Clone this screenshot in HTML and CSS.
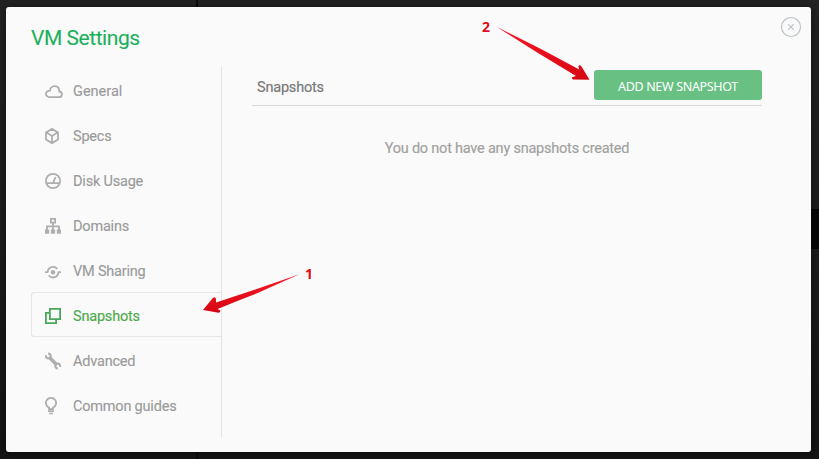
FILE: index.html
```html
<!DOCTYPE html>
<html lang="en">
<head>
<meta charset="utf-8">
<title>VM Settings</title>
<link rel="stylesheet" href="styles.css">
</head>
<body>
<div class="backdrop-line"></div>
<div class="backdrop-band"></div>
<main class="modal">
  <h1 class="title">VM Settings</h1>
  <button class="close" aria-label="Close"><svg width="22" height="22" viewBox="0 0 22 22"><circle cx="11" cy="11" r="9.5"/><path d="M8.2 8.2l5.6 5.6M13.8 8.2l-5.6 5.6"/></svg></button>
  <div class="columns">
    <nav class="menu">
      <a class="item"><svg class="icon" viewBox="0 0 18 18"><path d="M4.2 15.1h9.6a2.8 2.8 0 0 0 .5-5.6c0-3.5-2-5.4-4.6-5.4-2.7 0-4.6 2-4.7 4.6C2.5 8.9 1 10.2 1 12a3.1 3.1 0 0 0 3.2 3.1z"/></svg><span class="wide">General</span></a>
      <a class="item"><svg class="icon" viewBox="0 0 18 18"><path d="M7 1.9l6 3.5v7.2l-6 3.5-6-3.5V5.4zM1.5 5.6L7 9l5.500-3.400M7 9v6.700"/></svg><span>Specs</span></a>
      <a class="item"><svg class="icon" viewBox="0 0 18 18"><circle cx="8" cy="9" r="7.1"/><path d="M1.3 11.2h13.4M8 10.8l2.7-5.6"/></svg><span>Disk Usage</span></a>
      <a class="item"><svg class="icon" viewBox="0 0 18 18"><path d="M5.9 1.9h4.2v3.700H5.900zM8 6v7M2 13V9.400h12V13"/><path class="fill" d="M0 12.600h4.200v4.200H0zM5.900 12.600h4.200v4.200H5.900zM11.800 12.600H16v4.200h-4.200z"/></svg><span>Domains</span></a>
      <a class="item"><svg class="icon" viewBox="0 0 18 18"><path d="M0 10.200h2.400C3.200 6.800 5.400 4.900 8 4.900c1.900 0 3.300.8 4.300 2M16 10.200h-2.400c-.8 3.400-3 5.300-5.600 5.300-1.900 0-3.300-.8-4.300-2"/><circle class="fill" cx="8" cy="10.200" r="2.200"/></svg><span>VM Sharing</span></a>
      <a class="item active"><svg class="icon" viewBox="0 0 18 18"><path d="M4.900 1.900h10.200v10.200H4.900zM4 5.900H.9v10.200h10.200v-3"/></svg><span>Snapshots</span></a>
      <a class="item"><svg class="icon" viewBox="0 0 18 18"><path d="M1 3.300A2.400 2.400 0 1 0 3.100 1.600M15 14.700A2.400 2.400 0 1 0 12.900 16.400" stroke-width="2.200"/><path d="M5 6l6 6" stroke-width="3.600"/></svg><span>Advanced</span></a>
      <a class="item"><svg class="icon" viewBox="0 0 18 18"><path d="M4 12.100V10.600A5.100 5.100 0 1 1 8 10.600v1.500z"/><path class="fill" d="M3 13.300h6v1.800H3zM4.100 15.700h3.800v1.500H4.100z"/></svg><span>Common guides</span></a>
    </nav>
    <section class="content">
      <header class="bar"><h2 class="heading">Snapshots</h2><button class="add">ADD NEW SNAPSHOT</button></header>
      <p class="empty">You do not have any snapshots created</p>
    </section>
  </div>
</main>
<svg class="arrows" width="819" height="459" viewBox="0 0 819 459">
  <defs><linearGradient id="red" x2="0" y2="1"><stop offset="0" stop-color="#fa1824"/><stop offset="1" stop-color="#d50713"/></linearGradient></defs>
  <path d="M496.5 26.800L540 48.500L579.300 69.500L578.300 66Q580 64.200 581.500 66.500L589.500 79.800L573 79.500Q571 78 572.500 77L576 76L557 64.500L536 51.800Z"/>
  <path d="M299.5 274.300L256 289.300L216 302.500L216 299Q215.500 296.500 213 297.800L203 310L218.500 312.700Q221 312 220 310.300L217.500 309L243 298.800L257 293.300Z"/>
</svg>
<span class="mark one">1</span>
<span class="mark two">2</span>
</body>
</html>
```
FILE: styles.css
```css
* { box-sizing: border-box; }
body { margin: 0; height: 459px; padding: 7px 8px 7px 6px; overflow: hidden; background: linear-gradient(#222, #1d1d1d 50%, #141414); font-family: Roboto, "Liberation Sans", sans-serif; }
.backdrop-line { position: absolute; left: 196px; top: 0; width: 2px; height: 459px; background: #0b0b0b; }
.backdrop-band { position: absolute; right: 0; top: 209px; width: 9px; height: 40px; background: #060606; }
.modal { position: relative; height: 445px; padding: 0 49px 0 25px; background: #fafafa; border-radius: 3px; box-shadow: 0 1px 8px rgba(0,0,0,.5); }
.title { margin: 0; height: 60px; padding-top: 18px; font-size: 21px; line-height: 26px; font-weight: 400; color: #1bb15c; letter-spacing: -.45px; -webkit-text-stroke: .1px; }
.close { position: absolute; right: 9px; top: 9px; width: 22px; height: 22px; padding: 0; border: 0; background: none; }
.close svg { display: block; fill: none; stroke: #bdc3c7; stroke-width: 1.2; }
.columns { display: flex; height: 370px; }
.menu { width: 191px; border-right: 1px solid #e3e3e3; }
.item { display: flex; align-items: center; height: 45px; padding: 3px 0 0 14px; color: #9b9b9b; font-size: 14.5px; line-height: 20px; letter-spacing: -.2px; white-space: nowrap; -webkit-text-stroke: .15px; }
.item span { padding-top: 2px; }
.item .wide { letter-spacing: 0; }
.icon { width: 18px; height: 18px; margin: 0 10px 0 0; fill: none; stroke: #aeaeae; stroke-width: 1.8; flex: none; }
.icon .fill { fill: #aeaeae; stroke: none; }
.active { border: 1px solid #e6e6e6; border-right: 0; border-radius: 3px 0 0 3px; padding: 2px 0 0 13px; color: #4baa4d; }
.active .icon { stroke: #49a959; }
.content { flex: 1; padding-left: 30px; }
.bar { display: flex; justify-content: space-between; height: 39px; padding: 3px 0 0 5px; border-bottom: 1px solid #d8d8d8; }
.heading { margin: 8px 0 0; color: #777; font-size: 14.5px; line-height: 20px; font-weight: 400; letter-spacing: -.2px; -webkit-text-stroke: .15px; }
.add { width: 168px; height: 30px; padding: 3px 0 0; border: 0; border-radius: 3px; background: #68c182; color: #fff; font: 12.5px/20px "Noto Sans", sans-serif; letter-spacing: -.33px; }
.empty { margin: 33px 0 0; text-align: center; color: #a0a19d; font-size: 14.5px; line-height: 20px; letter-spacing: -.22px; -webkit-text-stroke: .15px; }
.arrows { position: absolute; left: 0; top: 0; fill: url(#red); pointer-events: none; }
.mark { position: absolute; color: #e30918; font: bold 14px/20px "Noto Sans", sans-serif; }
.one { left: 305px; top: 264px; }
.two { left: 482px; top: 17px; }
```
